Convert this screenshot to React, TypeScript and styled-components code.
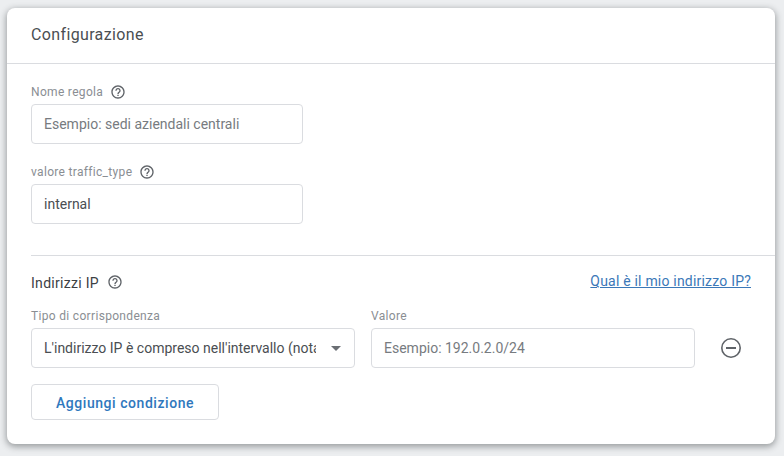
import styled, { createGlobalStyle } from "styled-components";

const GlobalStyle = createGlobalStyle`
  html, body {
    margin: 0;
    padding: 0;
    background: #eceef0;
  }
  * {
    box-sizing: border-box;
  }
`;

const Page = styled.div`
  width: 784px;
  height: 456px;
  padding: 8px 9px 12px 7px;
  font-family: Roboto, "Liberation Sans", sans-serif;
  overflow: hidden;
`;

const Card = styled.section`
  height: 436px;
  background: #fff;
  border-radius: 8px;
  box-shadow: 0 2px 6px 1px rgba(60, 64, 67, 0.45);
`;

const CardHeader = styled.header`
  height: 56px;
  padding: 0 24px 2px;
  display: flex;
  align-items: center;
  border-bottom: 1px solid #dadce0;
  font-size: 16px;
  letter-spacing: 0.36px;
  color: #4a4e52;
`;

const CardBody = styled.div`
  padding: 21px 0 0 24px;
`;

const Field = styled.div<{ $width: number }>`
  width: ${(p) => p.$width}px;
  margin-bottom: 21px;
`;

const Label = styled.label`
  height: 19px;
  padding-top: 1px;
  display: flex;
  align-items: flex-start;
  gap: 7px;
  font-size: 12px;
  line-height: 13px;
  letter-spacing: 0.32px;
  color: #8a8e93;
`;

const TextInput = styled.input`
  display: block;
  width: 100%;
  height: 40px;
  padding: 0 12px;
  border: 1px solid #dadce0;
  border-radius: 4px;
  outline: none;
  background: #fff;
  font-family: inherit;
  font-size: 14px;
  color: #4a4e52;

  &::placeholder {
    color: #777b80;
    opacity: 1;
  }
`;

const HelpIcon = styled.svg`
  width: 16px;
  height: 16px;
  margin-top: -2px;
  fill: #5f6368;
  flex: none;
`;

const Divider = styled.hr`
  margin: 31px 0 0;
  border: 0;
  border-top: 1px solid #dadce0;
`;

const SectionRow = styled.div`
  display: flex;
  justify-content: space-between;
  align-items: center;
  height: 24px;
  margin-top: 15px;
  padding-right: 24px;
`;

const SectionTitle = styled.h2`
  margin: 0;
  display: flex;
  align-items: center;
  gap: 8px;
  font-size: 14px;
  font-weight: 400;
  color: #3c4043;
  letter-spacing: 0.3px;
`;

const HelpLink = styled.a`
  font-size: 14px;
  letter-spacing: 0.2px;
  color: #3b78b8;
  text-decoration: underline;
  position: relative;
  top: -2px;
`;

const ConditionRow = styled.div`
  display: flex;
  align-items: flex-end;
  gap: 16px;
  margin-top: 14px;
`;

const ConditionField = styled.div`
  width: 324px;
`;

const SelectBox = styled.div`
  height: 40px;
  padding: 0 12px;
  display: flex;
  align-items: center;
  gap: 15px;
  border: 1px solid #dadce0;
  border-radius: 4px;
  font-size: 14px;
  color: #4a4e52;
`;

const SelectText = styled.span`
  flex: 1;
  overflow: hidden;
  white-space: nowrap;
`;

const Caret = styled.span`
  width: 0;
  height: 0;
  margin-right: 1px;
  border-left: 5px solid transparent;
  border-right: 5px solid transparent;
  border-top: 5px solid #6b6f74;
`;

const RemoveButton = styled.button`
  width: 24px;
  height: 24px;
  margin: 0 0 8px 8px;
  padding: 0;
  border: 0;
  background: none;

  svg {
    display: block;
    width: 24px;
    height: 24px;
    fill: none;
    stroke: #5f6368;
    stroke-width: 1.6;
  }
`;

const AddButton = styled.button`
  display: block;
  width: 188px;
  height: 36px;
  margin-top: 16px;
  padding: 2px 0 0;
  border: 1px solid #dadce0;
  border-radius: 4px;
  background: #fff;
  font-family: inherit;
  font-size: 14px;
  font-weight: 500;
  letter-spacing: 0.55px;
  color: #2f78bd;
`;

const Help = () => (
  <HelpIcon viewBox="0 0 24 24">
    <path d="M11 18h2v-2h-2v2zm1-16C6.48 2 2 6.48 2 12s4.48 10 10 10 10-4.48 10-10S17.52 2 12 2zm0 18c-4.41 0-8-3.59-8-8s3.59-8 8-8 8 3.59 8 8-3.59 8-8 8zm0-14c-2.21 0-4 1.79-4 4h2c0-1.1.9-2 2-2s2 .9 2 2c0 2-3 1.75-3 5h2c0-2.25 3-2.5 3-5 0-2.21-1.79-4-4-4z" />
  </HelpIcon>
);

const App = () => {
  return (
    <Page>
      <GlobalStyle />
      <Card>
        <CardHeader>Configurazione</CardHeader>
        <CardBody>
          <Field $width={272}>
            <Label>
              Nome regola <Help />
            </Label>
            <TextInput placeholder="Esempio: sedi aziendali centrali" />
          </Field>
          <Field $width={272}>
            <Label>
              valore traffic_type <Help />
            </Label>
            <TextInput defaultValue="internal" />
          </Field>
          <Divider />
          <SectionRow>
            <SectionTitle>
              Indirizzi IP <Help />
            </SectionTitle>
            <HelpLink href="#">Qual è il mio indirizzo IP?</HelpLink>
          </SectionRow>
          <ConditionRow>
            <ConditionField>
              <Label>Tipo di corrispondenza</Label>
              <SelectBox>
                <SelectText>L'indirizzo IP è compreso nell'intervallo (notazione CIDR)</SelectText>
                <Caret />
              </SelectBox>
            </ConditionField>
            <ConditionField>
              <Label>Valore</Label>
              <TextInput placeholder="Esempio: 192.0.2.0/24" />
            </ConditionField>
            <RemoveButton>
              <svg viewBox="0 0 24 24">
                <circle cx="12" cy="12" r="9.2" />
                <path d="M7 12h10" strokeWidth="2" />
              </svg>
            </RemoveButton>
          </ConditionRow>
          <AddButton>Aggiungi condizione</AddButton>
        </CardBody>
      </Card>
    </Page>
  );
};

export default App;
